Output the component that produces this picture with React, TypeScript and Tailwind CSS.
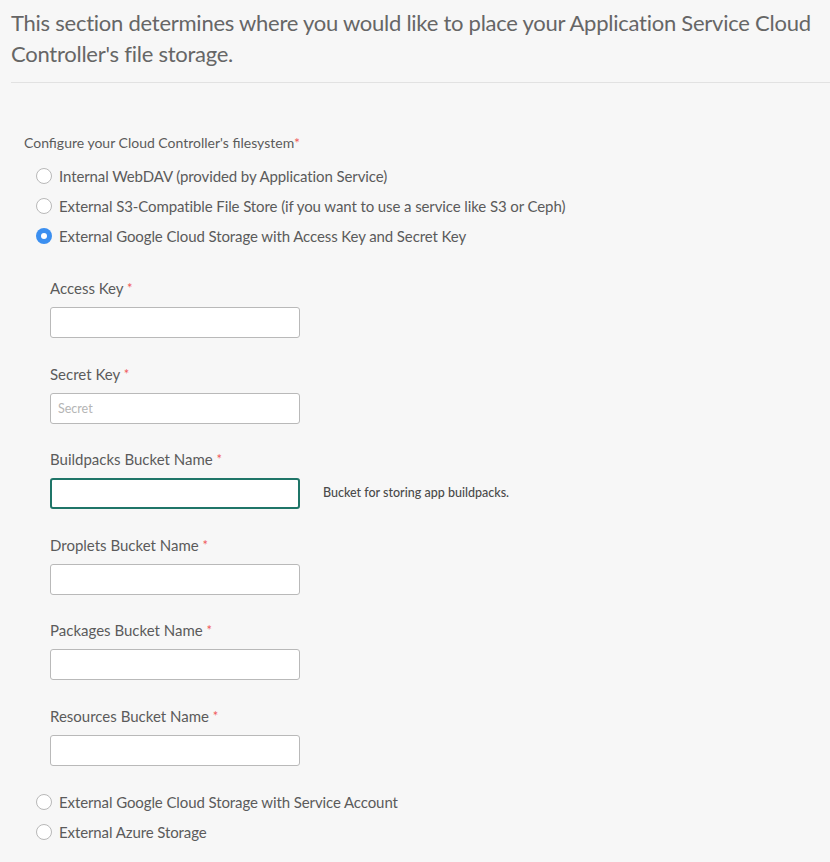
import React from "react";

const options = [
  "Internal WebDAV (provided by Application Service)",
  "External S3-Compatible File Store (if you want to use a service like S3 or Ceph)",
  "External Google Cloud Storage with Access Key and Secret Key",
];

const moreOptions = [
  "External Google Cloud Storage with Service Account",
  "External Azure Storage",
];

const fields: { label: string; placeholder?: string; help?: string; focused?: boolean }[] = [
  { label: "Access Key" },
  { label: "Secret Key", placeholder: "Secret" },
  { label: "Buildpacks Bucket Name", help: "Bucket for storing app buildpacks.", focused: true },
  { label: "Droplets Bucket Name" },
  { label: "Packages Bucket Name" },
  { label: "Resources Bucket Name" },
];

const Radio = ({ label, checked }: { label: string; checked?: boolean }) => (
  <label className="flex items-center h-[30px] pl-[36px]">
    {checked ? (
      <span className="w-4 h-4 rounded-full bg-[#3b8ff0] flex items-center justify-center shrink-0">
        <span className="w-[6px] h-[6px] rounded-full bg-white" />
      </span>
    ) : (
      <span className="w-4 h-4 rounded-full bg-white border border-[#b8b8b8] shrink-0" />
    )}
    <span className="ml-[7px] text-[15px] tracking-[-0.1px] text-[#5b5b5b]">{label}</span>
  </label>
);

export default function App() {
  return (
    <div
      className="min-h-[862px] w-[830px] bg-[#f7f7f7] overflow-hidden"
      style={{ fontFamily: "Lato, 'Open Sans', sans-serif" }}
    >
      <div className="pl-[11px] pt-[7px]">
        <h1 className="text-[22px] leading-[31px] text-[#666666] font-normal tracking-[-0.25px]">
          This section determines where you would like to place your Application Service Cloud
          Controller's file storage.
        </h1>
        <div className="mt-[13px] border-t border-[#e2e2e2]" />
      </div>

      <div className="pt-[49px]">
        <div className="pl-[24px] text-[14px] text-[#5b5b5b] leading-[22px]">
          Configure your Cloud Controller's filesystem<span className="text-[#f05a5a]">*</span>
        </div>
        <div className="mt-[7px]">
          {options.map((o, i) => (
            <Radio key={o} label={o} checked={i === 2} />
          ))}
        </div>

        <div className="pl-[50px] pt-[26px] pb-[21px] flex flex-col gap-[24.6px]">
          {fields.map((f) => (
            <div key={f.label}>
              <div className="text-[15px] text-[#5b5b5b] leading-[22px]">
                {f.label} <span className="text-[#f05a5a] text-[13px] align-top">*</span>
              </div>
              <div className="mt-[8px] flex items-center">
                <input
                  placeholder={f.placeholder}
                  className={
                    "w-[250px] h-[31px] rounded-[3px] bg-white px-[7px] text-[12.5px] outline-none placeholder:text-[#b5b5b5] " +
                    (f.focused
                      ? "border-2 border-[#1f7568]"
                      : "border border-[#b9b9b9]")
                  }
                />
                {f.help && (
                  <span className="ml-[23px] text-[12.5px] text-[#4a4a4a] font-medium">{f.help}</span>
                )}
              </div>
            </div>
          ))}
        </div>

        <div className="flex flex-col gap-[-1px]">
          {moreOptions.map((o) => (
            <Radio key={o} label={o} />
          ))}
        </div>
      </div>
    </div>
  );
}
